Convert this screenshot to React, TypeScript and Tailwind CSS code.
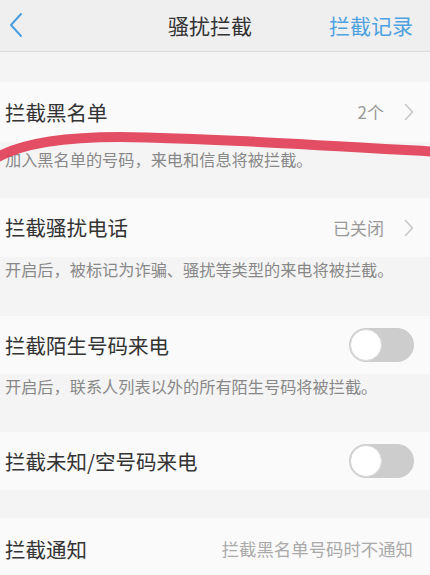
import React from "react";

const font = { fontFamily: '"Noto Sans CJK SC", "Noto Sans", sans-serif' };

function Chevron() {
  return (
    <svg width="10" height="18" viewBox="0 0 10 18" className="ml-5">
      <path d="M1.5 1.5 L8.5 9 L1.5 16.5" fill="none" stroke="#c8c8c8" strokeWidth="1.6" strokeLinecap="round" strokeLinejoin="round" />
    </svg>
  );
}

function Toggle() {
  return (
    <div className="w-[65px] h-[34px] rounded-full bg-[#cdcdcd] relative">
      <div className="absolute left-[1px] top-[1px] w-[32px] h-[32px] rounded-full bg-white border border-[#d8d8d8]" />
    </div>
  );
}

export default function App() {
  return (
    <div className="w-[430px] h-[575px] overflow-hidden bg-[#f4f4f4] relative" style={font}>
      {/* header */}
      <div className="h-[52px] bg-[#efefef] border-b border-[#dcdcdc] flex items-center relative">
        <svg width="16" height="26" viewBox="0 0 16 26" className="absolute left-[8px] top-[12px]">
          <path d="M13 2 L3 13 L13 24" fill="none" stroke="#4b9fe0" strokeWidth="2" strokeLinecap="round" strokeLinejoin="round" />
        </svg>
        <div className="absolute left-0 right-0 text-center text-[21px] text-[#333] pr-[10px]">骚扰拦截</div>
        <div className="absolute right-[17px] text-[21px] text-[#4ea2e0]">拦截记录</div>
      </div>

      <div className="h-[30px]" />

      {/* row 1 */}
      <div className="h-[60px] bg-[#fafafa] flex items-center px-[5px]">
        <div className="text-[20.5px] text-[#333] flex-1">拦截黑名单</div>
        <div className="text-[17px] text-[#999]">2个</div>
        <div className="mr-[11px] flex"><Chevron /></div>
      </div>
      <div className="h-[56px] px-[5px] pt-[5px] text-[16.2px] text-[#888]">加入黑名单的号码，来电和信息将被拦截。</div>

      {/* row 2 */}
      <div className="h-[59px] bg-[#fafafa] flex items-center px-[5px]">
        <div className="text-[20.5px] text-[#333] flex-1">拦截骚扰电话</div>
        <div className="text-[17px] text-[#999]">已关闭</div>
        <div className="mr-[11px] flex"><Chevron /></div>
      </div>
      <div className="h-[59px] px-[5px] text-[16.2px] text-[#888]">开启后，被标记为诈骗、骚扰等类型的来电将被拦截。</div>

      {/* row 3 */}
      <div className="h-[58px] bg-[#fafafa] flex items-center px-[5px]">
        <div className="text-[20.5px] text-[#333] flex-1">拦截陌生号码来电</div>
        <div className="mr-[11px] flex"><Toggle /></div>
      </div>
      <div className="h-[58px] px-[5px] text-[16.2px] text-[#888]">开启后，联系人列表以外的所有陌生号码将被拦截。</div>

      {/* row 4 */}
      <div className="h-[58px] bg-[#fafafa] flex items-center px-[5px]">
        <div className="text-[20.5px] text-[#333] flex-1">拦截未知/空号码来电</div>
        <div className="mr-[11px] flex"><Toggle /></div>
      </div>
      <div className="h-[28px]" />

      {/* row 5 */}
      <div className="h-[62px] bg-[#fafafa] flex items-center px-[5px]">
        <div className="text-[20.5px] text-[#333] flex-1">拦截通知</div>
        <div className="text-[17.4px] text-[#aaa] mr-[12px]">拦截黑名单号码时不通知</div>
      </div>

      {/* red scribble */}
      <svg width="430" height="40" viewBox="0 0 430 40" className="absolute left-0 top-[128px] pointer-events-none">
        <path d="M-4 30 C 20 16 60 9 120 9 C 200 10 300 16 440 24" fill="none" stroke="#e2445c" strokeWidth="10" strokeLinecap="round" opacity="0.95" />
      </svg>
    </div>
  );
}
